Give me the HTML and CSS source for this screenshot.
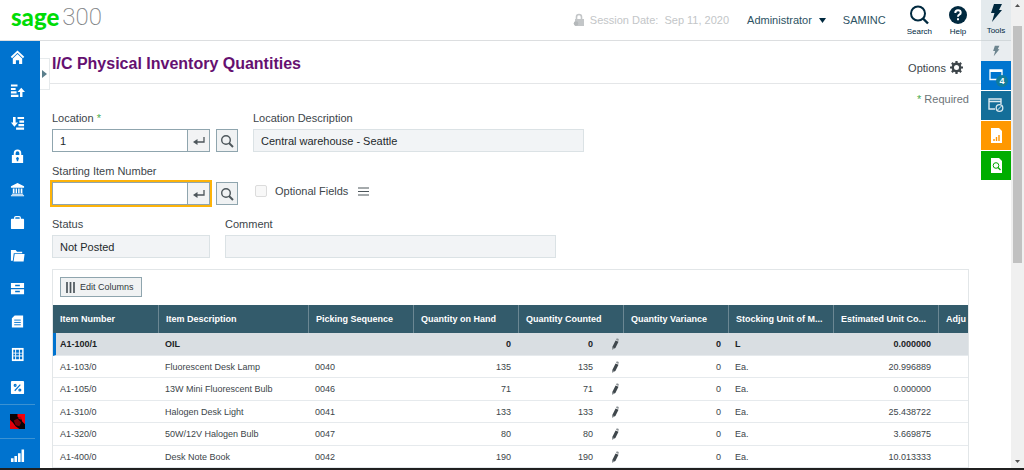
FILE: index.html
```html
<!DOCTYPE html>
<html lang="en">
<head>
<meta charset="utf-8">
<title>I/C Physical Inventory Quantities</title>
<link rel="stylesheet" href="styles.css">
</head>
<body>
<div class="app">
  <div class="page">
    <header class="topbar">
      <div class="logo"><span class="logo-name">sage</span><span class="logo-num">300</span></div>
      <div class="session">
        <svg width="12" height="14" viewBox="0 0 12 14"><path d="M3.5 6V4a2.5 2.5 0 0 1 5 0v2" fill="none" stroke="#c3c6c8" stroke-width="1.6"/><path d="M2 6h9v7H2z" fill="#c3c6c8"/><circle cx="3" cy="10.500" r="2.300" fill="#b4b8ba"/></svg>
        <span>Session Date:&nbsp; Sep 11, 2020</span>
      </div>
      <button class="user" type="button">Administrator <svg width="7" height="5" viewBox="0 0 7 5"><path d="M0 0h7L3.500 5z" fill="#00293f"/></svg></button>
      <span class="company">SAMINC</span>
      <button class="top-action" type="button">
        <svg width="20" height="20" viewBox="0 0 20 20" fill="none" stroke="#00293f"><circle cx="9" cy="8.500" r="7" stroke-width="2"/><path d="M14 13.500l5 5" stroke-width="2.400"/></svg>
        <span>Search</span>
      </button>
      <button class="top-action help" type="button">
        <svg width="20" height="20" viewBox="0 0 20 20"><circle cx="10" cy="10" r="9" fill="#00293f"/><path d="M7.300 8q0-2.700 2.700-2.700T12.700 7.700q0 1.300-1.400 2-1.300.7-1.300 2.100" fill="none" stroke="#fff" stroke-width="2"/><path d="M9 13.200h2v2H9z" fill="#fff"/></svg>
        <span>Help</span>
      </button>
    </header>
    <div class="body">
      <nav class="nav" aria-label="Modules">
        <a href="#" aria-label="Home"><svg viewBox="0 0 16 16"><path d="M1.500 8L8 1.800 14.500 8" fill="none" stroke="#fff" stroke-width="2"/><path d="M3 9l5-4.700L13 9v6H9.700v-4H6.300v4H3z" fill="#fff"/></svg></a>
        <a href="#" aria-label="Payables"><svg viewBox="0 0 16 16"><path d="M1 1.500h7v2.300H1zM1 5.200h5v2.300H1zM1 8.900h6v2.200H1zM1 12.500h8v2.300H1zM10.700 15V9.500H8L12 5l4 4.500h-2.700V15z" fill="#fff"/></svg></a>
        <a href="#" aria-label="Receivables"><svg viewBox="0 0 16 16"><path d="M8 1h7v2.300H8zM10 4.800h5v2.300h-5zM9 8.500h6v2.300H9zM6.500 12.300H15v2.300H6.500zM3.200 1v6H1l3.700 4.500L8.500 7H6V1z" fill="#fff"/></svg></a>
        <a href="#" aria-label="Security"><svg viewBox="0 0 16 16"><path d="M5 7V4.500a3 3 0 0 1 6 0V7" fill="none" stroke="#fff" stroke-width="2"/><path fill-rule="evenodd" d="M2 6.500h12V15H2zM7.200 11.500V13h1.600v-1.500a1.500 1.500 0 1 0-1.600 0z" fill="#fff"/></svg></a>
        <a href="#" aria-label="Bank"><svg viewBox="0 0 16 16"><path d="M8 1l7 3.500V6H1V4.500zM3 7h1.800v5H3zM6 7h1.500v5H6zM8.700 7h1.500v5H8.700zM11.400 7h1.800v5h-1.800zM2 12.500h12v1H2zM1 14h14v1.200H1z" fill="#fff"/></svg></a>
        <a href="#" aria-label="Business"><svg viewBox="0 0 16 16"><path d="M5 4.500V3q0-1.200 1.200-1.200h3.600Q11 1.800 11 3v1.500" fill="none" stroke="#fff" stroke-width="1.300"/><rect x="1" y="4" width="14" height="11" rx="1" fill="#fff"/></svg></a>
        <a href="#" aria-label="Files"><svg viewBox="0 0 16 16"><path d="M1 2h5l1.500 2H13v1.500H4L3 13.500H1z" fill="#fff"/><path d="M5 6.500h10.500l-1 8H3.800z" fill="#fff"/></svg></a>
        <a href="#" aria-label="Inventory"><svg viewBox="0 0 16 16"><path fill-rule="evenodd" d="M1 2h14v5.500H1zM5.500 4v1.600h5V4zM1 8.700h14v5.500H1zM5.500 10.300v1.600h5v-1.600z" fill="#fff"/></svg></a>
        <a href="#" aria-label="Documents"><svg viewBox="0 0 16 16"><path d="M5 1.500h9v13H2v-10z" fill="#fff"/><path d="M4.500 6.500h7M4.500 9h7M4.500 11.500h7" stroke="#0073cf" stroke-width="1"/></svg></a>
        <a href="#" aria-label="Ledger"><svg viewBox="0 0 16 16"><path d="M2 1h12.500v14H2z" fill="#fff"/><path d="M3.500 3h2v10h-2zM6.500 3h3v3h-3zM10.500 3h2.500v3h-2.500zM6.500 7h3v2h-3zM10.500 7h2.500v2h-2.500zM6.500 10h3v3h-3zM10.500 10h2.500v3h-2.500z" fill="#0073cf"/><path d="M3.500 6.500h2M3.500 9.500h2" stroke="#fff"/></svg></a>
        <a href="#" aria-label="Tax"><svg viewBox="0 0 16 16"><rect x="1" y="1" width="14" height="14" rx="1" fill="#fff"/><g fill="none" stroke="#0073cf" stroke-width="1.300"><path d="M11 5l-6 6.500"/><circle cx="5.500" cy="5.700" r="1"/><circle cx="10.500" cy="10.700" r="1"/></g></svg></a>
        <a href="#" class="ruled" aria-label="Add-on"><svg viewBox="0 0 16 16"><path d="M0 0h16v16H0z" fill="#0b0206"/><path d="M8 0h8v11l-3-3-1-3-4-2z" fill="#f2000d"/><path d="M0 6l3 3 3 4 4 3H0z" fill="#e4000b"/><path d="M4 7l4-2 4 4-2 4-4-1z" fill="#7c0007"/><path d="M9 3l3 0 0 3-3-1z" fill="#c00008"/></svg></a>
        <a href="#" class="ruled" aria-label="Reports"><svg viewBox="0 0 16 16"><path d="M1 11h2.800v4H1zM4.700 8.500h2.800V15H4.700zM8.500 5.500h2.800V15H8.500zM12.300 1.500H15V15h-2.700z" fill="#fff"/></svg></a>
      </nav>
      <main class="main">
        <button class="expander" type="button" aria-label="Expand menu"><svg width="5" height="8" viewBox="0 0 5 8"><path d="M0 0l5 4-5 4z" fill="#5b7f8c"/></svg></button>
        <div class="titlebar">
          <h1>I/C Physical Inventory Quantities</h1>
          <button class="options" type="button">Options
            <svg width="13" height="13" viewBox="0 0 14 14"><circle cx="7" cy="7" r="4" fill="none" stroke="#3d454a" stroke-width="2.600"/><path d="M7 0v3M7 11v3M0 7h3M11 7h3M2 2l2 2M10 10l2 2M2 12l2-2M10 4l2-2" stroke="#3d454a" stroke-width="2.400"/></svg>
          </button>
        </div>
        <form class="form">
          <p class="required"><span class="star">*</span> Required</p>
          <div class="row">
            <div class="field">
              <label for="loc">Location <span class="star">*</span></label>
              <div class="finder">
                <div class="combo"><input id="loc" type="text" value="1"><button type="button" aria-label="Go"><svg width="12" height="10" viewBox="0 0 12 10"><path d="M11 1v5H2" fill="none" stroke="#4d565b" stroke-width="1.300"/><path d="M0 6l4.500-3v6z" fill="#4d565b"/></svg></button></div>
                <button class="find" type="button" aria-label="Find location"><svg width="14" height="14" viewBox="0 0 14 14" fill="none" stroke="#4d565b"><circle cx="6" cy="6" r="4.300" stroke-width="1.400"/><path d="M9 9l4 4" stroke-width="1.900"/></svg></button>
              </div>
            </div>
            <div class="field">
              <label for="desc">Location Description</label>
              <input class="wide" id="desc" type="text" value="Central warehouse - Seattle" readonly>
            </div>
          </div>
          <div class="row">
            <div class="field">
              <label for="item">Starting Item Number</label>
              <div class="finder">
                <div class="combo active"><input id="item" type="text"><button type="button" aria-label="Go"><svg width="12" height="10" viewBox="0 0 12 10"><path d="M11 1v5H2" fill="none" stroke="#4d565b" stroke-width="1.300"/><path d="M0 6l4.500-3v6z" fill="#4d565b"/></svg></button></div>
                <button class="find" type="button" aria-label="Find item"><svg width="14" height="14" viewBox="0 0 14 14" fill="none" stroke="#4d565b"><circle cx="6" cy="6" r="4.300" stroke-width="1.400"/><path d="M9 9l4 4" stroke-width="1.900"/></svg></button>
              </div>
            </div>
            <div class="optional">
              <input id="opt" type="checkbox" disabled><label for="opt">Optional Fields</label>
              <button type="button" aria-label="Optional fields list"><svg width="11" height="9" viewBox="0 0 11 9"><path d="M0 1h11M0 4.500h11M0 8h11" stroke="#4d565b" stroke-width="1.200"/></svg></button>
            </div>
          </div>
          <div class="row last">
            <div class="field">
              <label for="status">Status</label>
              <input class="narrow" id="status" type="text" value="Not Posted" readonly>
            </div>
            <div class="field">
              <label for="comment">Comment</label>
              <input class="wide" id="comment" type="text" readonly>
            </div>
          </div>
        </form>
        <section class="grid">
          <div class="grid-tools"><button type="button"><svg width="9" height="11" viewBox="0 0 9 11"><path d="M1 0v11M4.500 0v11M8 0v11" stroke="#4d565b" stroke-width="1.700"/></svg>Edit Columns</button></div>
          <table>
            <colgroup><col><col class="c-desc"><col><col><col class="c-count"><col class="c-edit"><col><col><col><col class="c-last"></colgroup>
            <thead><tr><th>Item Number</th><th>Item Description</th><th>Picking Sequence</th><th>Quantity on Hand</th><th colspan="2">Quantity Counted</th><th>Quantity Variance</th><th>Stocking Unit of M...</th><th>Estimated Unit Co...</th><th>Adju</th></tr></thead>
            <tbody id="rows"></tbody>
          </table>
        </section>
      </main>
    </div>
  </div>
  <aside class="tools">
    <button class="tools-main" type="button"><svg width="14" height="20" viewBox="0 0 14 20"><path d="M5 1h8l-3 6h3L3 19l2.500-9H2z" fill="#00293f"/></svg><span>Tools</span></button>
    <button class="tools-mini" type="button" aria-label="Quick tools"><svg width="8" height="12" viewBox="0 0 14 20"><path d="M5 1h8l-3 6h3L3 19l2.500-9H2z" fill="#6d858f"/></svg></button>
    <button class="tile windows" type="button" aria-label="Open windows"><svg width="15" height="13" viewBox="0 0 15 13"><path d="M1 1h12v9.500H1z" fill="none" stroke="#fff" stroke-width="1.300"/><path d="M1 2h12" stroke="#fff" stroke-width="2"/></svg><span class="badge">4</span></button>
    <button class="tile recent" type="button" aria-label="Recent windows"><svg width="16" height="15" viewBox="0 0 16 15" fill="none" stroke="#dbe9ef"><path d="M7 11H1V1h12v5M1 3.500h12" stroke-width="1.400"/><circle cx="11.500" cy="10" r="3.300" stroke-width="1.300"/><path d="M9.500 12l4-4"/></svg></button>
    <button class="tile report" type="button" aria-label="Reports"><svg width="13" height="15" viewBox="0 0 13 15"><path d="M1 0h8l3 3v12H1z" fill="#fff"/><path d="M4 13v-2M6.500 13V9M9 13V7" stroke="#ff9500" stroke-width="1.400"/></svg></button>
    <button class="tile inquiry" type="button" aria-label="Inquiries"><svg width="13" height="15" viewBox="0 0 13 15"><path d="M1 0h8l3 3v12H1z" fill="#fff"/><circle cx="6" cy="7.500" r="2.800" fill="none" stroke="#00a800"/><path d="M8 9.500l2.500 2.500" stroke="#00a800" stroke-width="1.300"/></svg></button>
  </aside>
  <div class="scrollbar" aria-hidden="true">
    <svg width="5" height="3" viewBox="0 0 5 3"><path d="M0 3h5L2.500 0z" fill="#505050"/></svg>
    <div class="track"><div class="thumb"></div></div>
    <svg width="5" height="3" viewBox="0 0 5 3"><path d="M0 0h5L2.500 3z" fill="#505050"/></svg>
  </div>
</div>
<script src="rows.js"></script>
</body>
</html>
```
FILE: rows.js
```js
const items = [
  ["A1-100/1", "OIL", "", "0", "0", "0", "L", "0.000000"],
  ["A1-103/0", "Fluorescent Desk Lamp", "0040", "135", "135", "0", "Ea.", "20.996889"],
  ["A1-105/0", "13W Mini Fluorescent Bulb", "0046", "71", "71", "0", "Ea.", "0.000000"],
  ["A1-310/0", "Halogen Desk Light", "0041", "133", "133", "0", "Ea.", "25.438722"],
  ["A1-320/0", "50W/12V Halogen Bulb", "0047", "80", "80", "0", "Ea.", "3.669875"],
  ["A1-400/0", "Desk Note Book", "0042", "190", "190", "0", "Ea.", "10.013333"]
];
const pencil = '<svg width="8" height="12" viewBox="0 0 8 12"><path d="M4.600 2.500l2.900 1.200L4.400 10 1.500 11 1.300 9z" fill="#3f474c"/><path d="M5 1.800L5.800.2l2 .9-.4 1.800z" fill="#8b9195"/><path d="M1.300 9l2.500 1.300L1 12z" fill="#8b9195"/></svg>';
const body = document.getElementById("rows");
items.forEach((r, i) => {
  const tr = document.createElement("tr");
  if (i === 0) tr.className = "selected";
  tr.innerHTML = `<td>${r[0]}</td><td>${r[1]}</td><td>${r[2]}</td><td class="num">${r[3]}</td><td class="num">${r[4]}</td><td class="edit">${pencil}</td><td class="num">${r[5]}</td><td>${r[6]}</td><td class="num">${r[7]}</td><td></td>`;
  body.append(tr);
});
```
FILE: styles.css
```css
* { box-sizing: border-box; }
body { margin: 0; font-family: "Liberation Sans", Arial, sans-serif; font-size: 11px; color: #3c454a; background: #fff; }
button { font: inherit; color: inherit; border: 0; background: none; padding: 0; margin: 0; }
svg { display: block; flex: none; }
.app { display: flex; height: 100vh; overflow: hidden; border-bottom: 2px solid #202020; }
.page { flex: 1; min-width: 0; display: flex; flex-direction: column; }

.topbar { display: flex; align-items: center; height: 41px; flex: none; border-bottom: 1px solid #dcdee0; padding-right: 13px; }
.logo { display: flex; align-items: center; gap: 3px; margin-left: 11px; margin-right: auto; height: 40px; padding-bottom: 6px; }
.logo-name { font-family: Lato, sans-serif; font-weight: 900; font-size: 24px; line-height: 34px; color: #00dc06; }
.logo-num { font-family: Roboto, sans-serif; font-weight: 200; font-size: 24px; line-height: 34px; color: #7f8486; }
.session { display: flex; align-items: center; gap: 5px; color: #c3c6c8; margin-right: 18px; }
.user { display: flex; align-items: center; gap: 7px; color: #2c5263; margin-right: 17px; }
.company { color: #2c5263; margin-right: 21px; }
.top-action { display: flex; flex-direction: column; align-items: center; gap: 2px; font-size: 8px; line-height: 9px; color: #00293f; }
.top-action.help { margin-left: 16px; }

.body { flex: 1; min-height: 0; display: flex; }
.nav { width: 40px; flex: none; background: #0073cf; overflow: hidden; }
.nav a { display: flex; align-items: center; width: 35px; height: 33px; padding-left: 10px; }
.nav a.ruled { height: 34px; border-top: 1px solid #3b92d3; }
.nav svg { width: 15px; height: 15px; }

.main { position: relative; flex: 1; min-width: 0; }
.expander { position: absolute; left: 0; top: 17px; width: 10px; height: 32px; padding-left: 2px; background: #fff; border: 1px solid #e6eaec; border-left: 0; }
.titlebar { display: flex; justify-content: space-between; align-items: center; height: 43px; padding: 3px 18px 0 12px; border-bottom: 1px solid #e4e6e8; }
h1 { margin: 0; font-size: 16px; line-height: 20px; color: #651070; }
.options { display: flex; align-items: center; gap: 4px; padding-top: 8px; }

.form { padding: 8px 12px 0; }
.required { margin: 0; text-align: right; line-height: 14px; color: #6c7377; }
.star { color: #4cae4f; }
.form .row { display: flex; gap: 15px; margin-bottom: 12px; }
.form .row.last { margin-bottom: 11px; }
.form .row:nth-of-type(1) { margin-top: 5px; }
.field { display: flex; flex-direction: column; gap: 4px; }
.field label { line-height: 14px; }
input[type="text"] { height: 23px; font: inherit; color: #23292c; border: 1px solid #dbe2e5; border-radius: 0; background: #f2f4f6; padding: 0 7px; margin: 0; outline: 0; }
.finder { display: flex; gap: 6px; }
.combo { display: flex; width: 158px; height: 23px; border: 1px solid #8fa5ae; }
.combo.active { outline: 2px solid #fdb309; }
.combo input[type="text"] { flex: 1; min-width: 0; height: 21px; border: 0; background: #fff; }
.combo button { width: 22px; display: grid; place-items: center; border-left: 1px solid #8fa5ae; background: #f2f3f4; }
.find { width: 22px; height: 23px; display: grid; place-items: center; border: 1px solid #8fa5ae; background: #f0f2f3; }
.wide { width: 331px; }
.narrow { width: 158px; }
.optional { display: flex; align-items: center; height: 20px; margin-top: 17px; padding-left: 2px; }
.optional input { appearance: none; width: 12px; height: 12px; margin: 0 8px 0 0; border: 1px solid #dcdcdc; border-radius: 2px; background: #f8f8f8; }
.optional button { margin-left: 10px; }

.grid { margin: 0 12px; border: 1px solid #e2e6e8; border-bottom: 0; overflow: hidden; }
.grid-tools { padding: 7px 7px 8px; }
.grid-tools button { display: flex; align-items: center; gap: 5px; height: 20px; padding: 0 7px 0 5px; border: 1px solid #8fa5ae; background: #f0f2f3; font-size: 9px; color: #30383c; }
table { table-layout: fixed; width: 100%; border-collapse: separate; border-spacing: 0; font-size: 9px; }
col { width: 105px; }
col.c-desc { width: 150px; }
col.c-count { width: 82px; }
col.c-edit { width: 23px; }
col.c-last { width: auto; }
th { height: 28px; padding: 0 7px; text-align: left; color: #fff; background: #335b6b; border-left: 1px solid #6b8793; white-space: nowrap; }
th:first-child { border-left: 0; }
th:last-child { padding-right: 0; }
td { height: 23px; padding: 0 7px; border-bottom: 1px solid #e6eaed; white-space: nowrap; }
tr:nth-child(even) td { height: 22px; }
td.num { text-align: right; }
td.edit { padding: 0 0 0 11px; }
.selected td { font-weight: bold; color: #1c2225; background: #d9dee2; }
.selected td:first-child { border-left: 3px solid #0073cf; padding-left: 4px; }

.tools { width: 30px; flex: none; display: flex; flex-direction: column; }
.tools-main { display: flex; flex-direction: column; align-items: center; gap: 3px; height: 41px; padding-top: 3px; background: #e4eaed; border-bottom: 1px solid #d2d8db; font-size: 8px; line-height: 9px; color: #00293f; }
.tools-mini { display: grid; place-items: center; height: 20px; background: #e9edf0; }
.tile { position: relative; display: grid; place-items: center; height: 30px; border-bottom: 1px solid #fff; }
.windows { background: #0075cf; }
.recent { background: #146e99; }
.report { background: #ff9800; }
.inquiry { background: #00ad00; }
.badge { position: absolute; right: 3px; bottom: 3px; width: 12px; height: 12px; border-radius: 6px; background: #117c9c; color: #fff; font-size: 9px; font-weight: bold; line-height: 12px; }

.scrollbar { width: 13px; flex: none; display: flex; flex-direction: column; align-items: center; padding: 4px 0 5px; background: #f0f0f0; }
.track { flex: 1; width: 9px; padding: 19px 0; }
.thumb { height: 57%; background: #c1c1c1; }
```
